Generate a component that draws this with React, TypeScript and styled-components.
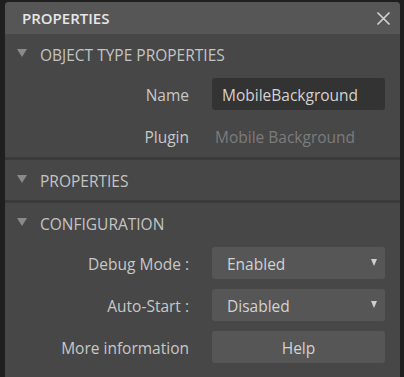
import React from "react";
import styled, { createGlobalStyle } from "styled-components";

const Global = createGlobalStyle`
  html, body { margin: 0; padding: 0; background: #1f1f1f; }
  body { font-family: "Segoe UI", "Open Sans", "Noto Sans", sans-serif; }
`;

const Page = styled.div`
  width: 404px;
  height: 377px;
  overflow: hidden;
  padding: 2px 4px 0 5px;
  box-sizing: border-box;
`;

const Panel = styled.div`
  background: #474747;
  border-radius: 4px 4px 0 0;
  height: 400px;
  overflow: hidden;
`;

const Header = styled.div`
  height: 32px;
  background: #565656;
  display: flex;
  align-items: center;
  justify-content: space-between;
  padding: 0 9px 0 17px;
  color: #e6e6e6;
  font-size: 15px;
  font-weight: 600;
`;

const CloseBtn = styled.svg`
  width: 15px;
  height: 15px;
  display: block;
`;

const Section = styled.div<{ $last?: boolean; $open?: boolean }>`
  border-bottom: ${(p) => (p.$last ? "none" : "3px solid #3a3a3a")};
  padding-bottom: ${(p) => (p.$open ? "5px" : "0")};
`;

const SectionHead = styled.div`
  height: 40px;
  display: flex;
  align-items: center;
  padding-left: 12px;
  gap: 13px;
  color: #c4c4c4;
  font-size: 15.5px;
  padding-top: 1px;
  box-sizing: border-box;
`;

const Tri = styled.span`
  width: 0;
  height: 0;
  border-left: 5px solid transparent;
  border-right: 5px solid transparent;
  border-top: 8px solid #8a8a8a;
  margin-top: -3px;
`;

const Rows = styled.div`
  display: flex;
  flex-direction: column;
  gap: 10px;
  padding-top: 4px;
`;

const Row = styled.div`
  display: grid;
  grid-template-columns: 1fr 173px;
  column-gap: 23px;
  padding-right: 15px;
  height: 32px;
  align-items: center;
`;

const Label = styled.div`
  text-align: right;
  color: #c8c8c8;
  font-size: 15.5px;
  padding-top: 1px;
`;

const TextInput = styled.div`
  height: 32px;
  box-sizing: border-box;
  background: #333333;
  border-radius: 3px;
  display: flex;
  align-items: center;
  padding: 1px 0 0 10px;
  color: #d2d2d2;
  font-size: 15.5px;
`;

const PlainValue = styled.div`
  color: #7c7c7c;
  font-size: 15.5px;
  padding: 1px 0 0 3px;
`;

const Select = styled.div`
  height: 32px;
  box-sizing: border-box;
  background: #565656;
  border-radius: 3px;
  display: flex;
  align-items: center;
  justify-content: space-between;
  padding: 1px 8px 0 15px;
  color: #d2d2d2;
  font-size: 15.5px;
`;

const Caret = styled.span`
  width: 0;
  height: 0;
  border-left: 3.5px solid transparent;
  border-right: 3.5px solid transparent;
  border-top: 7px solid #cfcfcf;
  margin-top: -3px;
`;

const Button = styled.div`
  height: 32px;
  box-sizing: border-box;
  background: #565656;
  border-radius: 3px;
  display: flex;
  align-items: center;
  justify-content: center;
  padding-top: 1px;
  color: #d2d2d2;
  font-size: 15.5px;
`;

export default function App() {
  return (
    <>
      <Global />
      <Page>
        <Panel>
          <Header>
            <span>PROPERTIES</span>
            <CloseBtn viewBox="0 0 15 15">
              <path d="M1.5 1.5 L13.5 13.5 M13.5 1.5 L1.5 13.5" stroke="#d0d0d0" strokeWidth="1.7" />
            </CloseBtn>
          </Header>
          <Section $open>
            <SectionHead>
              <Tri />
              OBJECT TYPE PROPERTIES
            </SectionHead>
            <Rows>
              <Row>
                <Label>Name</Label>
                <TextInput>MobileBackground</TextInput>
              </Row>
              <Row>
                <Label>Plugin</Label>
                <PlainValue>Mobile Background</PlainValue>
              </Row>
            </Rows>
          </Section>
          <Section>
            <SectionHead>
              <Tri />
              PROPERTIES
            </SectionHead>
          </Section>
          <Section $last $open>
            <SectionHead>
              <Tri />
              CONFIGURATION
            </SectionHead>
            <Rows>
              <Row>
                <Label>Debug Mode :</Label>
                <Select>
                  <span>Enabled</span>
                  <Caret />
                </Select>
              </Row>
              <Row>
                <Label>Auto-Start :</Label>
                <Select>
                  <span>Disabled</span>
                  <Caret />
                </Select>
              </Row>
              <Row>
                <Label>More information</Label>
                <Button>Help</Button>
              </Row>
            </Rows>
          </Section>
        </Panel>
      </Page>
    </>
  );
}
